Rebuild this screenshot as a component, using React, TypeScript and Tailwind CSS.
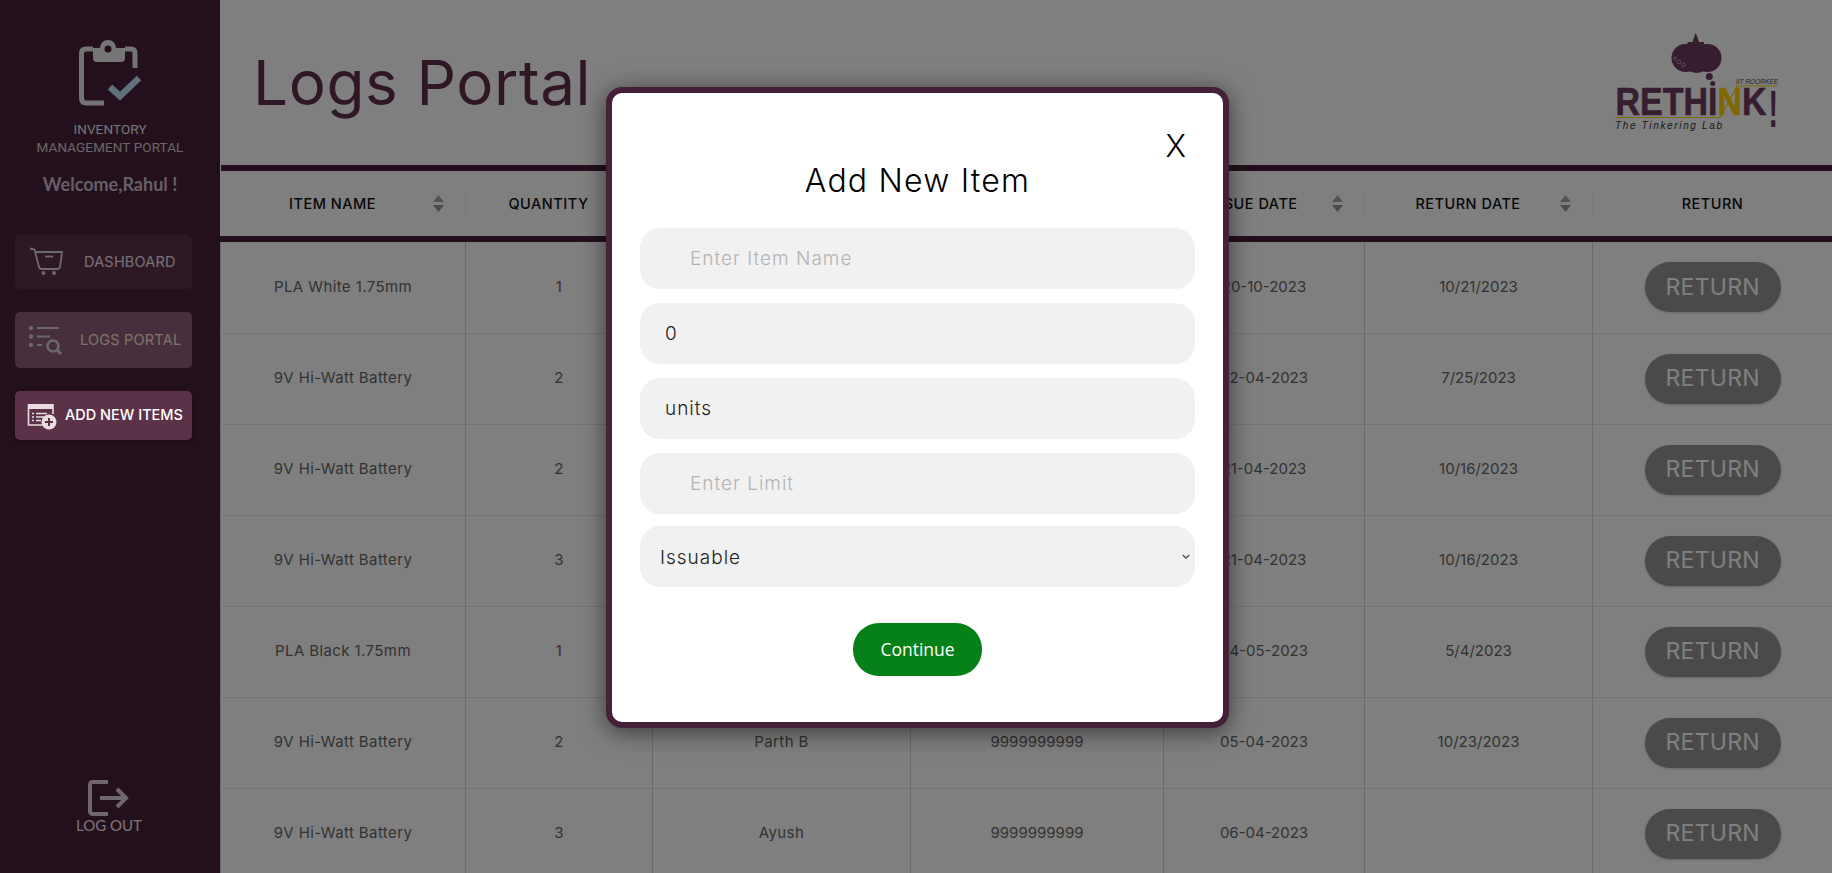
import React from "react";

const rows = [
  ["PLA White 1.75mm", "1", "Rahul S", "9999999999", "20-10-2023", "10/21/2023"],
  ["9V Hi-Watt Battery", "2", "Parth B", "9999999999", "02-04-2023", "7/25/2023"],
  ["9V Hi-Watt Battery", "2", "Ayush", "9999999999", "21-04-2023", "10/16/2023"],
  ["9V Hi-Watt Battery", "3", "Ayush", "9999999999", "21-04-2023", "10/16/2023"],
  ["PLA Black 1.75mm", "1", "Rahul S", "9999999999", "04-05-2023", "5/4/2023"],
  ["9V Hi-Watt Battery", "2", "Parth B", "9999999999", "05-04-2023", "10/23/2023"],
  ["9V Hi-Watt Battery", "3", "Ayush", "9999999999", "06-04-2023", ""],
];

function SortArrows() {
  return (
    <svg width="11" height="17" viewBox="0 0 11 17" className="mr-[21px] shrink-0">
      <path d="M5.5 0 L11 7 L0 7 Z" fill="#a8a8a8" />
      <path d="M5.5 17 L11 10 L0 10 Z" fill="#989898" />
    </svg>
  );
}

function Head({ label, sort = true, last = false }: { label: string; sort?: boolean; last?: boolean }) {
  return (
    <th className="p-0 font-medium">
      <div className={`flex h-[24px] items-center ${last ? "" : "border-r border-[#f0f0f0]"}`}>
        <span className={`flex-1 whitespace-nowrap text-center ${sort ? "pl-[12px]" : ""}`}>{label}</span>
        {sort && <SortArrows />}
      </div>
    </th>
  );
}

function ClipboardIcon() {
  return (
    <svg width="68" height="72" viewBox="75 36 68 72" className="mx-auto block">
      <path d="M92 49 H85 Q80.500 49 80.500 53 V98 Q80.500 103 85 103 H103" fill="none" stroke="#e6e6e6" strokeWidth="5" />
      <path d="M124 49 H130 Q134 49 134 53 V68" fill="none" stroke="#e6e6e6" strokeWidth="5" />
      <path d="M92 48 H99 Q100 40 107 40 Q114 40 115 48 H124 V58 Q124 62 120 62 H96 Q92 62 92 58 Z" fill="#ececec" />
      <circle cx="107" cy="49" r="3.500" fill="#482038" />
      <path d="M109 87 L119 96 L138 78" fill="none" stroke="#bee2f6" strokeWidth="6.500" />
    </svg>
  );
}

function CartIcon() {
  return (
    <svg width="36" height="30" viewBox="29 247 36 30" className="absolute left-[14px] top-[12px]">
      <path d="M30 248.500 L34.500 249.500 L39 267 Q39.500 269 42 269 H57 Q59.500 269 60 267 L62 252 H36" fill="none" stroke="#dcd4d8" strokeWidth="1.800" />
      <path d="M45 256.500 H53" stroke="#dcd4d8" strokeWidth="1.800" />
      <circle cx="43.500" cy="273" r="2" fill="#dcd4d8" />
      <circle cx="54" cy="273" r="2" fill="#dcd4d8" />
    </svg>
  );
}

function LogsIcon() {
  return (
    <svg width="36" height="32" viewBox="28 325 36 32" className="absolute left-[13px] top-[13px]">
      <g fill="#d8d0d4">
        <circle cx="31" cy="328" r="2.200" />
        <circle cx="31" cy="336.500" r="2.200" />
        <circle cx="31" cy="345" r="2.200" />
      </g>
      <path d="M37 328 H59 M37 336.500 H50 M37 345 H42" stroke="#d8d0d4" strokeWidth="2.200" />
      <circle cx="53" cy="346" r="5.500" fill="none" stroke="#d8d0d4" strokeWidth="2.600" />
      <path d="M57 350 L61 354" stroke="#d8d0d4" strokeWidth="2.800" />
    </svg>
  );
}

function AddIcon() {
  return (
    <svg width="32" height="32" viewBox="25 401 32 32" className="absolute left-[11px] top-[10px]">
      <path d="M27 404 H52 V409 H27 Z" fill="#e8dcdf" />
      <path d="M27.500 404 V425 H42 M52 404 V414" fill="none" stroke="#e8dcdf" strokeWidth="1.600" />
      <path d="M31 413.500 H33 M35 413.500 H46 M31 417 H33 M35 417 H43 M31 420.500 H33 M35 420.500 H40" stroke="#e8dcdf" strokeWidth="1.400" />
      <circle cx="48" cy="422" r="7.500" fill="#e8dcdf" />
      <path d="M48 418 V426 M44 422 H52" stroke="#5c3249" strokeWidth="2" />
    </svg>
  );
}

function LogoutIcon() {
  return (
    <svg width="44" height="38" viewBox="86 780 44 38" className="mx-auto block -translate-x-[2px]">
      <path d="M108 783 H93 Q90 783 90 786 V812 Q90 815 93 815 H108" fill="none" stroke="#e0ced8" strokeWidth="4" />
      <path d="M100 799 H126 M117 790 L126 799 L117 808" fill="none" stroke="#e0ced8" strokeWidth="4" />
    </svg>
  );
}

function Logo() {
  return (
    <svg width="190" height="110" viewBox="1600 25 190 110">
      <g fill="#6e3a60">
        <path d="M1695.700 33 L1698 39 L1699 42 H1704 V44.500 H1708 L1712 50 H1680 L1683.500 44.500 H1687.500 V42 H1692.500 L1693.500 39 Z" />
        <circle cx="1685.500" cy="58" r="14" />
        <circle cx="1707.500" cy="58" r="14" />
        <circle cx="1696.500" cy="58" r="15" />
        <circle cx="1709.300" cy="76.500" r="3.500" />
        <circle cx="1712.700" cy="83.500" r="2.500" />
      </g>
      <g fill="none" stroke="#c8b8c4" strokeWidth="0.800">
        <circle cx="1675" cy="58.500" r="1.500" />
        <circle cx="1679" cy="62" r="1.800" />
        <circle cx="1683.500" cy="65" r="1.800" />
      </g>
      <text x="1615.500" y="115" fontFamily="'Liberation Sans', sans-serif" fontWeight="700" fontSize="39" textLength="151" lengthAdjust="spacingAndGlyphs" fill="#6e3a60" stroke="#6e3a60" strokeWidth="0.600">
        RETHI<tspan fill="#ffd000" stroke="#ffd000">N</tspan>K
      </text>
      <text transform="translate(1768.500 127) scale(0.55 1)" fontFamily="'Liberation Sans', sans-serif" fontWeight="700" fontSize="52" fill="#6e3a60">!</text>
      <path d="M1615 117.500 H1720 L1737 86 H1778" fill="none" stroke="#ffd000" strokeWidth="1.200" />
      <text x="1736" y="84" fontFamily="'Liberation Sans', sans-serif" fontStyle="italic" fontSize="8" textLength="42" lengthAdjust="spacingAndGlyphs" fill="#444">IIT ROORKEE</text>
      <text x="1615" y="129" fontFamily="'Liberation Sans', sans-serif" fontStyle="italic" fontSize="10" textLength="107" fill="#333">The Tinkering Lab</text>
    </svg>
  );
}

const inputClass =
  "block h-[61px] w-[555px] rounded-[20px] bg-[#f1f1f1] text-[19px] font-light tracking-[1px] text-[#222] outline-none placeholder:text-[#b4b4b4]";

export default function App() {
  return (
    <div className="relative flex h-[873px] w-[1832px] overflow-hidden bg-white font-['Inter',sans-serif]">
      <aside className="flex h-full w-[220px] shrink-0 flex-col bg-[#482038] pt-[36px]">
        <ClipboardIcon />
        <div className="mt-[12px] text-center font-['Roboto',sans-serif] text-[13.500px] leading-[18px] tracking-[0.1px] text-[#e8e8e8]">
          <div>INVENTORY</div>
          <div className="text-[#cfcfcf]">MANAGEMENT PORTAL</div>
        </div>
        <div className="mt-[16px] text-center font-['Lato',sans-serif] text-[18px] font-bold leading-[24px] text-[#c8bfcc]">
          Welcome,Rahul !
        </div>
        <div className="relative ml-[15px] mt-[39px] flex h-[54px] w-[177px] items-center rounded-[5px] bg-[#5a3048] pl-[69px] text-[14.500px] leading-none tracking-[0.2px] text-[#f0e4f0]">
          <CartIcon />
          DASHBOARD
        </div>
        <div className="relative ml-[15px] mt-[23px] flex h-[56px] w-[177px] items-center rounded-[5px] bg-[#8e5e7a] pl-[65px] text-[14.500px] leading-none tracking-[0.2px] text-[#ffe8d0]">
          <LogsIcon />
          LOGS PORTAL
        </div>
        <div className="relative z-20 ml-[15px] mt-[23px] flex h-[49px] w-[177px] items-center rounded-[5px] bg-[#5c3249] pl-[50px] text-[14.500px] font-medium leading-none text-white shadow-[0_2px_4px_rgba(0,0,0,0.3)]">
          <AddIcon />
          ADD NEW ITEMS
        </div>
        <div className="mt-auto pb-[40px] text-center">
          <LogoutIcon />
          <div className="-translate-x-[1px] font-['Lato',sans-serif] text-[15px] leading-[16px] text-[#f0e8f0]">LOG OUT</div>
        </div>
      </aside>

      <main className="flex min-w-0 flex-1 flex-col">
        <header className="flex h-[165px] shrink-0 items-start justify-between pl-[33px] pr-[42px] pt-[25px]">
          <h1 className="pt-[22px] text-[62px] font-normal leading-[72px] tracking-[0.6px] text-[#5e2e4c]">Logs Portal</h1>
          <Logo />
        </header>
        <table className="w-[1612px] table-fixed border-collapse">
          <colgroup>
            <col className="w-[245px]" />
            <col className="w-[187px]" />
            <col className="w-[258px]" />
            <col className="w-[253px]" />
            <col className="w-[201px]" />
            <col className="w-[228px]" />
            <col className="w-[240px]" />
          </colgroup>
          <thead>
            <tr className="h-[71px] border-y-[6px] border-[#482038] text-[14.500px] tracking-[0.5px] text-[#111]">
              <Head label="ITEM NAME" />
              <Head label="QUANTITY" />
              <Head label="NAME" />
              <Head label="PHONE NUMBER" />
              <Head label="ISSUE DATE" />
              <Head label="RETURN DATE" />
              <Head label="RETURN" sort={false} last />
            </tr>
          </thead>
          <tbody>
            {rows.map((r, i) => (
              <tr key={i} className={`${i === 0 ? "h-[94px]" : "h-[91px]"} border-b border-[#e8e8e8] text-center text-[15px] tracking-[0.4px] text-[#666]`}>
                <td className="border-x border-[#d4d4d4] p-0">{r[0]}</td>
                <td className={`border-r border-[#d4d4d4] p-0 ${r[1] === "1" ? "text-[#a04a50]" : ""}`}>{r[1]}</td>
                <td className="border-r border-[#d4d4d4] p-0">{r[2]}</td>
                <td className="border-r border-[#d4d4d4] p-0 tracking-normal">{r[3]}</td>
                <td className="border-r border-[#d4d4d4] p-0 tracking-normal">{r[4]}</td>
                <td className="border-r border-[#d4d4d4] p-0 tracking-normal">{r[5]}</td>
                <td className="p-0">
                  <button className="mx-auto block h-[50px] w-[136px] rounded-[25px] bg-[#959595] text-[23px] tracking-[0.3px] text-white shadow-[0_1px_3px_rgba(0,0,0,0.2)]">
                    RETURN
                  </button>
                </td>
              </tr>
            ))}
          </tbody>
        </table>
      </main>

      <div className="absolute inset-0 z-10 bg-black/50" />

      <div className="absolute left-[606px] top-[87px] z-30 h-[641px] w-[623px] rounded-[16px] border-[6px] border-[#452139] bg-white pl-[28px] shadow-[0_4px_24px_rgba(0,0,0,0.55)]">
        <span className="absolute right-[37px] top-[33px] text-[31px] font-light leading-[40px] text-black">X</span>
        <h2 className="pr-[28px] pt-[68px] text-center text-[32px] font-light leading-[40px] tracking-[1.2px] text-black">Add New Item</h2>
        <input className={`${inputClass} mt-[27px] pl-[50px]`} placeholder="Enter Item Name" readOnly />
        <input className={`${inputClass} mt-[14px] pl-[25px]`} value="0" readOnly />
        <input className={`${inputClass} mt-[14px] pl-[25px]`} value="units" readOnly />
        <input className={`${inputClass} mt-[14px] pl-[50px]`} placeholder="Enter Limit" readOnly />
        <div className="relative mt-[12px] w-[555px]">
          <select className={`${inputClass} appearance-none pl-[20px] pt-[3px]`} defaultValue="Issuable">
            <option>Issuable</option>
            <option>Non-Issuable</option>
          </select>
          <svg width="8" height="6" viewBox="0 0 8 6" className="pointer-events-none absolute right-[5px] top-[28px]">
            <path d="M0.800 1 L4 4.200 L7.200 1" fill="none" stroke="#444" strokeWidth="1.300" />
          </svg>
        </div>
        <button className="mx-auto mt-[36px] block h-[53px] w-[129px] -translate-x-[14px] rounded-[26px] bg-[#068018] font-['Open_Sans',sans-serif] text-[17.500px] leading-none text-white">
          Continue
        </button>
      </div>
    </div>
  );
}
